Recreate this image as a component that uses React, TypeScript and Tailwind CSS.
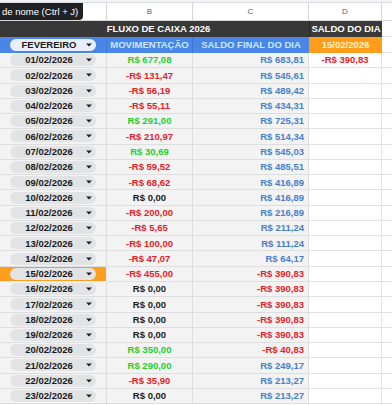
import React from 'react'

type Tone = 'g' | 'r' | 'k' | 'b'

const rows: [string, string, Tone, string, Tone][] = [
    ['01/02/2026', 'R$ 677,08', 'g', 'R$ 683,81', 'b'],
    ['02/02/2026', '-R$ 131,47', 'r', 'R$ 545,61', 'b'],
    ['03/02/2026', '-R$ 56,19', 'r', 'R$ 489,42', 'b'],
    ['04/02/2026', '-R$ 55,11', 'r', 'R$ 434,31', 'b'],
    ['05/02/2026', 'R$ 291,00', 'g', 'R$ 725,31', 'b'],
    ['06/02/2026', '-R$ 210,97', 'r', 'R$ 514,34', 'b'],
    ['07/02/2026', 'R$ 30,69', 'g', 'R$ 545,03', 'b'],
    ['08/02/2026', '-R$ 59,52', 'r', 'R$ 485,51', 'b'],
    ['09/02/2026', '-R$ 68,62', 'r', 'R$ 416,89', 'b'],
    ['10/02/2026', 'R$ 0,00', 'k', 'R$ 416,89', 'b'],
    ['11/02/2026', '-R$ 200,00', 'r', 'R$ 216,89', 'b'],
    ['12/02/2026', '-R$ 5,65', 'r', 'R$ 211,24', 'b'],
    ['13/02/2026', '-R$ 100,00', 'r', 'R$ 111,24', 'b'],
    ['14/02/2026', '-R$ 47,07', 'r', 'R$ 64,17', 'b'],
    ['15/02/2026', '-R$ 455,00', 'r', '-R$ 390,83', 'r'],
    ['16/02/2026', 'R$ 0,00', 'k', '-R$ 390,83', 'r'],
    ['17/02/2026', 'R$ 0,00', 'k', '-R$ 390,83', 'r'],
    ['18/02/2026', 'R$ 0,00', 'k', '-R$ 390,83', 'r'],
    ['19/02/2026', 'R$ 0,00', 'k', '-R$ 390,83', 'r'],
    ['20/02/2026', 'R$ 350,00', 'g', '-R$ 40,83', 'r'],
    ['21/02/2026', 'R$ 290,00', 'g', 'R$ 249,17', 'b'],
    ['22/02/2026', '-R$ 35,90', 'r', 'R$ 213,27', 'b'],
    ['23/02/2026', 'R$ 0,00', 'k', 'R$ 213,27', 'b'],
]

const tone: Record<Tone, string> = {
    g: 'text-[#22d028]',
    r: 'text-[#e3222a]',
    k: 'text-[#1a1a1a]',
    b: 'text-[#4a7fcb]',
}

const Chip = ({ label, light }: { label: string; light?: boolean }) => (
    <div className={`relative mx-[10px] h-[12px] w-[90px] rounded-full flex items-center justify-center ${light ? 'bg-[#e8f0fe]' : 'bg-[#e2e3e5]'}`}>
        <span className="-ml-[8px]">{label}</span>
        <span className="absolute right-[4px] top-1/2 -translate-y-1/2 w-0 h-0 border-l-[3px] border-r-[3px] border-t-[3px] border-l-transparent border-r-transparent border-t-[#202124]" />
    </div>
)

export default function App() {
    return (
        <div
            className="relative w-[392px] h-[405px] overflow-hidden bg-white text-[9.5px] font-bold text-[#1a1a1a] leading-none"
            style={{ fontFamily: '"Liberation Sans", Arial, sans-serif' }}
        >
            {/* top strip */}
            <div className="h-[3px] bg-[#f1f3f4] border-b border-[#dadce0]" />

            <div className="grid grid-cols-[107px_86px_116px_73px_1fr]">

                {/* column letters */}
                <div className="h-[18px] border-r border-b border-[#d6d6d6] bg-white" />
                <div className="h-[18px] border-r border-b border-[#d6d6d6] bg-white flex items-center justify-center font-normal text-[8px] text-[#5f6368]">B</div>
                <div className="h-[18px] border-r border-b border-[#d6d6d6] bg-white flex items-center justify-center font-normal text-[8px] text-[#5f6368]">C</div>
                <div className="h-[18px] border-r border-b border-[#d6d6d6] bg-white flex items-center justify-center font-normal text-[8px] text-[#5f6368]">D</div>
                <div className="h-[18px] border-b border-[#d6d6d6] bg-white" />

                {/* row 1 */}
                <div className="col-span-3 h-[16px] bg-[#383838] text-white flex items-center justify-center pl-[8px]">
                    FLUXO DE CAIXA 2026
                </div>
                <div className="h-[16px] bg-[#3a3a3a] text-white flex items-center justify-center border-l border-[#2a2a2a]">
                    SALDO DO DIA
                </div>
                <div className="h-[16px] border-b border-[#e2e2e2]" />

                {/* row 2 */}
                <div className="h-[16px] bg-[#4a86e8] flex items-center border-r border-[#3e76d0]">
                    <Chip label="FEVEREIRO" light />
                </div>
                <div className="h-[16px] bg-[#4a86e8] text-[#c9e7ff] flex items-center justify-center border-r border-[#3e76d0]">
                    MOVIMENTAÇÃO
                </div>
                <div className="h-[16px] bg-[#4a86e8] text-[#c9e7ff] flex items-center justify-center">
                    SALDO FINAL DO DIA
                </div>
                <div className="h-[16px] bg-[#ff9d1c] text-[#fff3c8] flex items-center justify-center">
                    15/02/2026
                </div>
                <div className="h-[16px] border-b border-[#e2e2e2]" />

                {/* data rows */}
                {rows.map(([date, mov, mt, saldo, st], i) => {
                    const hot = date === '15/02/2026'
                    return (
                        <React.Fragment key={date}>
                            <div className={`h-[15.27px] flex items-center border-r border-b ${hot ? 'bg-[#ff9d1c] border-[#f0f0f0]' : 'bg-[#f3f3f3] border-[#dedede]'}`}>
                                <Chip label={date} />
                            </div>
                            <div className={`h-[15.27px] flex items-center justify-center bg-[#f3f3f3] border-r border-b border-[#dedede] ${tone[mt]}`}>
                                {mov}
                            </div>
                            <div className={`h-[15.27px] flex items-center justify-end pr-[4px] bg-[#f3f3f3] border-r border-b border-[#dedede] ${tone[st]}`}>
                                {saldo}
                            </div>
                            <div className={`h-[15.27px] flex items-center justify-center bg-white border-r border-b border-[#e2e2e2] ${tone.r}`}>
                                {i === 0 ? '-R$ 390,83' : ''}
                            </div>
                            <div className="h-[15.27px] bg-white border-b border-[#e2e2e2]" />
                        </React.Fragment>
                    )
                })}
            </div>

            {/* tooltip */}
            <div className="absolute left-0 top-[3px] h-[17px] w-[83px] rounded-br-[4px] bg-[#202124] text-white font-normal text-[9.5px] flex items-center pl-[2px]">
                de nome (Ctrl + J)
            </div>
        </div>
    )
}
